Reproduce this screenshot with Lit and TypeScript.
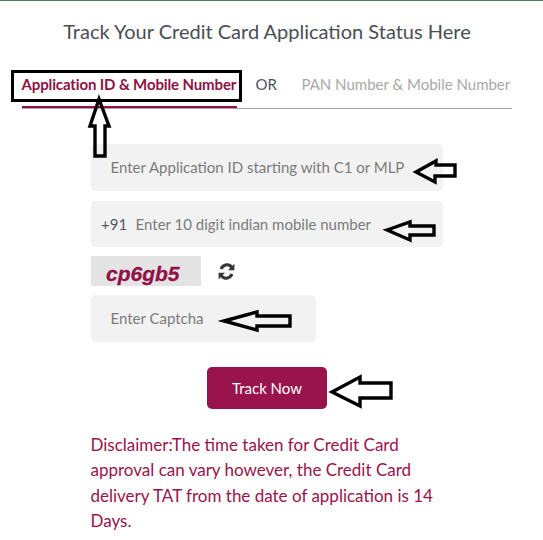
import { LitElement, html, css, svg } from "lit";
import { customElement } from "lit/decorators.js";

const arrows: string[] = [
  "M99 99 L90 126 L95 126 L95 156 L105 156 L105 126 L109 126 Z",
  "M416 172 L436 161 L436 165 L455 165 L455 176 L435 176 L435 182 Z",
  "M387 230 L410 222 L410 226 L434 226 L434 235 L410 235 L410 240 Z",
  "M224 321 L257 312 L257 316 L290 316 L290 326 L257 326 L257 330 Z",
  "M332 392 L360 377 L360 383 L391 383 L391 398 L360 398 L360 406 Z",
];

@customElement("app-root")
export class AppRoot extends LitElement {
  static styles = css`
    :host {
      display: block;
      position: relative;
      width: 543px;
      height: 540px;
      overflow: hidden;
      background: #fff;
      font-family: Lato, "Liberation Sans", sans-serif;
      border-top: 1px solid #4f7f5c;
      box-sizing: border-box;
    }
    .title {
      margin: 0;
      padding-top: 17px;
      font-size: 20px;
      font-weight: 400;
      line-height: 26px;
      text-align: center;
      color: #4a4e54;
      width: 534px;
    }
    .tabs {
      display: flex;
      margin: 25px 31px 0 22px;
      border-bottom: 1px solid #a3a3a3;
      height: 40px;
      box-sizing: border-box;
      font-size: 15px;
      line-height: 20px;
      padding-top: 5px;
    }
    .tab {
      height: 34px;
      box-sizing: border-box;
      white-space: nowrap;
    }
    .active {
      width: 215px;
      font-weight: 700;
      color: #8f1146;
      border-bottom: 2px solid #8f1146;
      letter-spacing: -0.13px;
      margin-left: -0.5px;
    }
    .or { margin-left: 19px; color: #50545a; }
    .pan { margin-left: 24.5px; color: #a8a8a8; }
    .form {
      display: flex;
      flex-direction: column;
      align-items: flex-start;
      margin: 35px 0 0 91px;
    }
    .field {
      display: flex;
      align-items: center;
      box-sizing: border-box;
      height: 47px;
      background: #f2f2f2;
      border-radius: 5px;
      font-size: 15px;
      color: #55595f;
    }
    .wide { width: 352px; }
    .second { margin-top: 10px; height: 46px; padding-left: 10px; gap: 8.5px; }
    .first { padding: 0 0 2px 19.5px; }
    .captcha-field { width: 225px; padding: 0 0 2px 19.5px; margin-top: 9px; }
    input {
      flex: 1;
      min-width: 0;
      border: 0;
      padding: 0;
      background: transparent;
      font: inherit;
      outline: none;
    }
    input::placeholder { color: #7b7b7b; opacity: 1; }
    .captcha-row {
      display: flex;
      align-items: center;
      margin-top: 9px;
      height: 30px;
    }
    .captcha {
      width: 110px;
      height: 30px;
      box-sizing: border-box;
      padding-left: 15px;
      background: #e4e4e4;
      font: italic 700 21px/36px "Liberation Sans", Arial, sans-serif;
      -webkit-text-stroke: 0.3px #8f1146;
      color: #8f1146;
      overflow: hidden;
    }
    .refresh { margin-left: 17px; display: block; }
    .btn {
      align-self: flex-start;
      margin: 25px 0 0 116px;
      width: 120px;
      height: 42px;
      border: 0;
      border-radius: 5px;
      background: #99134c;
      color: #fff;
      font: 400 15px Lato, "Liberation Sans", sans-serif;
    }
    .note {
      margin: 23px 0 0 90.5px;
      width: 350px;
      font-size: 17px;
      line-height: 25.4px;
      color: #99134c;
    }
    .box {
      position: absolute;
      left: 11px;
      top: 69px;
      width: 231px;
      height: 32px;
      box-sizing: border-box;
      border: 3px solid #000;
    }
    .marks {
      position: absolute;
      left: 0;
      top: -1px;
      width: 543px;
      height: 540px;
      pointer-events: none;
    }
  `;

  render() {
    return html`
      <h1 class="title">Track Your Credit Card Application Status Here</h1>
      <div class="tabs">
        <div class="tab active">Application ID &amp; Mobile Number</div>
        <div class="tab or">OR</div>
        <div class="tab pan">PAN Number &amp; Mobile Number</div>
      </div>
      <div class="form">
        <div class="field wide first">
          <input placeholder="Enter Application ID starting with C1 or MLP" />
        </div>
        <div class="field wide second">
          <span>+91</span>
          <input placeholder="Enter 10 digit indian mobile number" />
        </div>
        <div class="captcha-row">
          <div class="captcha">cp6gb5</div>
          <svg class="refresh" width="17" height="17" viewBox="0 0 17 17" fill="#33363b">
            <path d="M16.4.8v6.4h-6.4l2.3-2.3A4.4 4.4 0 0 0 4.7 6.4L1.6 5.5A7.6 7.6 0 0 1 14.4 2.7z" />
            <path d="M.6 16.2V9.8h6.4l-2.3 2.3a4.4 4.4 0 0 0 7.6-1.5l3.1.9A7.6 7.6 0 0 1 2.6 14.3z" />
          </svg>
        </div>
        <div class="field captcha-field">
          <input placeholder="Enter Captcha" />
        </div>
        <button class="btn">Track Now</button>
      </div>
      <p class="note">
        Disclaimer:The time taken for Credit Card approval can vary however, the
        Credit Card delivery TAT from the date of application is 14 Days.
      </p>
      <div class="box"></div>
      <svg class="marks" viewBox="0 0 543 540" fill="none" stroke="#000" stroke-width="3.4">
        ${arrows.map((d) => svg`<path d=${d} />`)}
      </svg>
    `;
  }
}
